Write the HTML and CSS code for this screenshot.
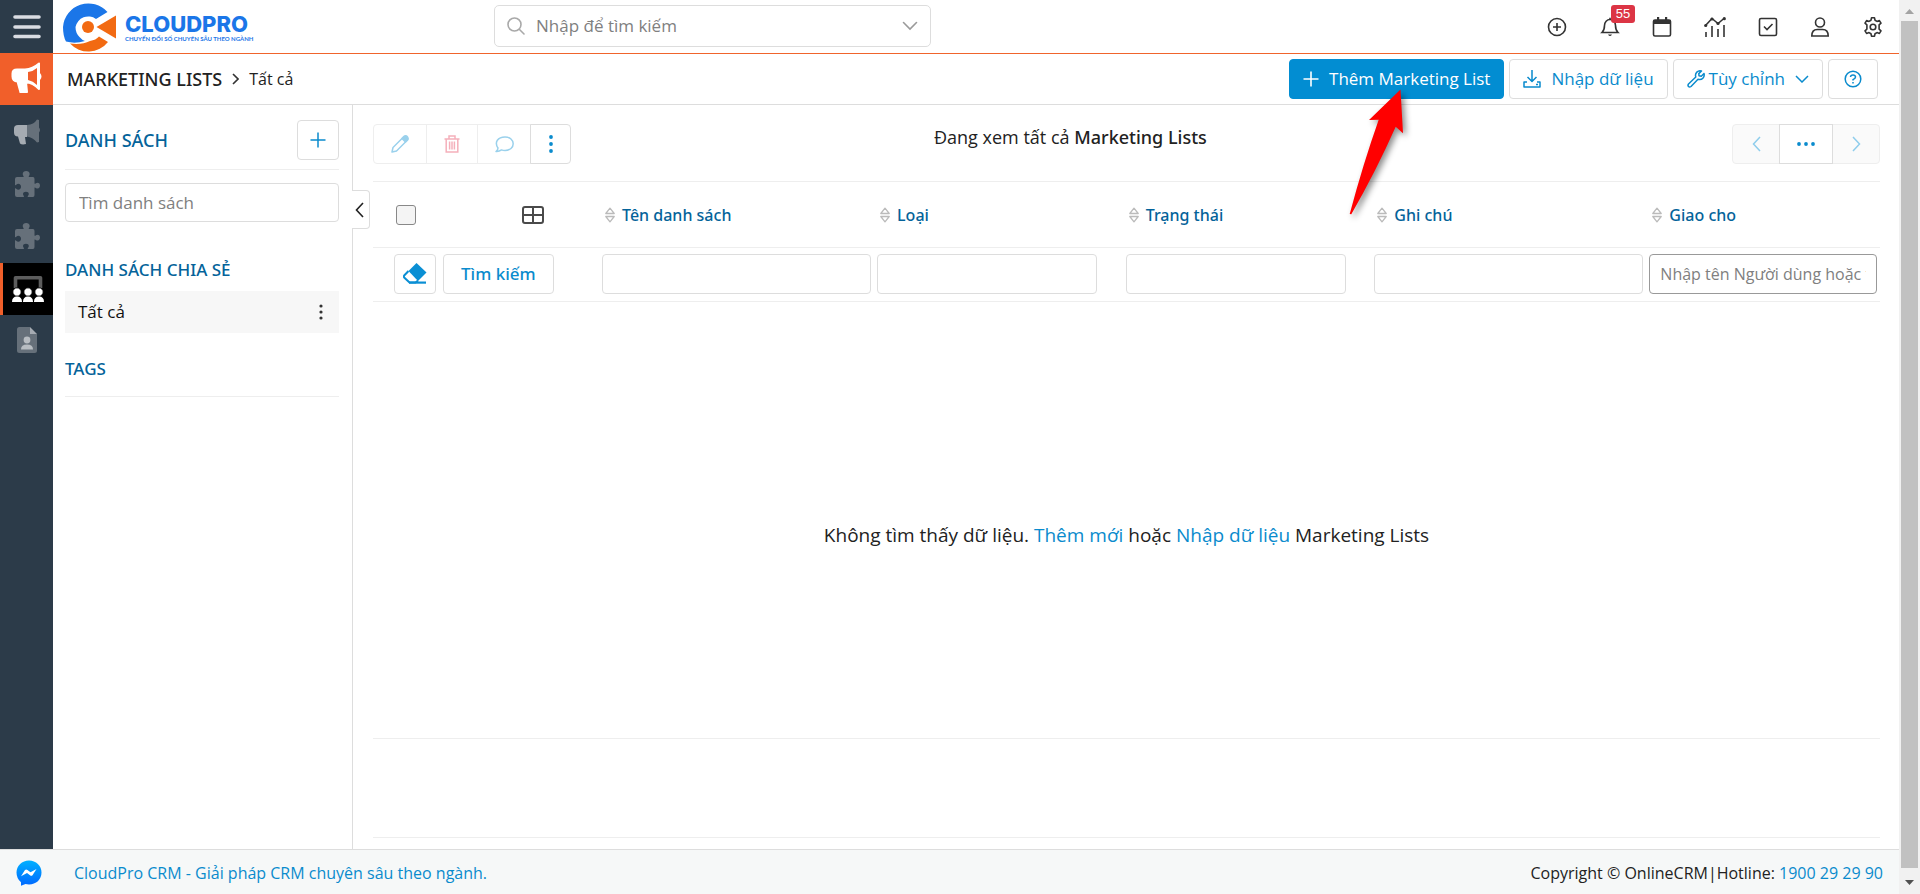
FILE: index.html
```html
<!DOCTYPE html>
<html lang="vi">
<head>
<meta charset="utf-8">
<title>Marketing Lists - CloudPro CRM</title>
<link rel="stylesheet" href="styles.css">
</head>
<body>
<svg class="sprite" aria-hidden="true">
  <symbol id="puzzle" viewBox="0 0 26 26"><path d="M1 8q0-2 2-2h6.500c.8-.5-.8-1.500-.8-3 0-2 1.600-3 3.500-3s3.500 1 3.500 3c0 1.500-1.600 2.500-.8 3H19q1.500 0 1.500 2v4.500c.6 1 1.500-.8 3-.8 1.700 0 2.500 1.300 2.500 2.800s-.8 3-2.500 3c-1.500 0-2.400-1.700-3-.8V24q0 2-1.500 2h-5c-1-.8.800-1.200.8-3 0-1.500-1.200-2.200-2.800-2.200S9 21.500 9 23c0 1.800 1.600 2.200.8 3H3q-2 0-2-2v-6.500c.8-1 1.500 1.300 3.300 1.300 1.700 0 2.700-1.400 2.700-3s-1-3-2.700-3C2.500 12.800 1.800 15 1 14z"/></symbol>
  <symbol id="sort" viewBox="0 0 10 16"><path d="M.8 6.500 5 1.200l4.200 5.300zM.8 9.500 5 14.800l4.200-5.300z" fill="none" stroke="currentColor" stroke-width="1.300" stroke-linejoin="round"/></symbol>
</svg>
<div class="viewport">
<div class="app">
  <div class="body">
    <nav class="rail" aria-label="Menu">
      <button class="rail-menu" aria-label="Mở menu"><svg width="28" height="24" viewBox="0 0 28 24"><path d="M2 2h24M2 12h24M2 21.500h24" stroke="#d9dce2" stroke-width="3.600" stroke-linecap="round"/></svg></button>
      <a class="rail-brand" href="#" aria-label="Marketing"><svg width="32" height="32" viewBox="0 0 32 32"><path d="M28 2.500v25.500c-4-4-8-6.500-13-7l1 10q-3 1.500-6.500.500L6.500 20.500Q1.500 20 1.500 15.500v-3Q1.500 8.500 6 8.500h8C20 8 24 6 28 2.500z" fill="#fff" stroke="#fff" stroke-width="2" stroke-linejoin="round"/><path d="M26 7v17q-4-4-9-5v-8q5-.5 9-4z" fill="#f15f2a"/><path d="M29 12q3 3.500 0 7z" fill="#fff"/></svg></a>
      <div class="rail-list">
        <a href="#" aria-label="Chiến dịch"><svg width="26" height="26" viewBox="0 0 26 26"><path d="M13 6H4Q0 6 0 9.500v4q0 4 4 4l2 7q2 1.500 6 .5l-1-7h2z" fill="#a5abb2"/><path d="M13 6q7-.5 10-5.500l2 .5v7.500q2 2.500 0 5v9.500l-2 .5q-4-5-10-6z" fill="#66707a"/></svg></a>
        <a href="#" aria-label="Tiện ích"><svg width="26" height="26" fill="#66707a"><use href="#puzzle"/></svg></a>
        <a href="#" aria-label="Mở rộng"><svg width="26" height="26" fill="#66707a"><use href="#puzzle"/></svg></a>
        <a class="current" href="#" aria-label="Marketing Lists"><svg width="32" height="26" viewBox="0 0 32 26"><path d="M3.500 12V1.800h25V12" fill="none" stroke="#5d5d5d" stroke-width="3.600" stroke-linejoin="round"/><g fill="#fff" stroke="#000"><circle cx="5" cy="16" r="4.200"/><circle cx="16" cy="16" r="4.200"/><circle cx="27" cy="16" r="4.200"/></g><path d="M0 26q0-5.500 5-5.500t5 5.500zM11 26q0-5.500 5-5.500t5 5.500zM22 26q0-5.500 5-5.500t5 5.500z" fill="#fff"/></svg></a>
        <a href="#" aria-label="Hồ sơ"><svg width="20" height="26" viewBox="0 0 20 26"><path d="M2.500 0H13v7h7v16.500q0 2.500-2.500 2.500h-15Q0 26 0 23.500v-21Q0 0 2.500 0z" fill="#66707a"/><path d="M13 0l7 7h-7z" fill="#a5abb2"/><circle cx="10" cy="13" r="3.400" fill="#b8bdc2"/><path d="M4 22.500q0-5 6-5t6 5z" fill="#b8bdc2"/></svg></a>
      </div>
    </nav>
    <div class="main">
      <header class="topbar">
        <a class="logo" href="#">
          <svg width="54" height="52" viewBox="0 0 54 52"><path d="M3 40.500Q0 35 0 26A25.500 25.500 0 0 1 44.500 11L33 18A13 13 0 0 0 12.500 26q0 6 4 10 3 3.500 5.500 4-10 3-19 .5z" fill="#1b76e8"/><path d="M7 42.500q12 1.500 20-2.500 6-1 9-4.500l9 5.500A25 25 0 0 1 7 42.500z" fill="#f26a12"/><circle cx="25" cy="26" r="6" fill="#f26a12"/><path d="M33.500 26 53 14.500v23z" fill="#f26a12"/></svg>
          <span class="logo-text"><strong>CLOUDPRO</strong><small>CHUYỂN ĐỔI SỐ CHUYÊN SÂU THEO NGÀNH</small></span>
        </a>
        <div class="search">
          <svg width="18" height="18" viewBox="0 0 18 18" fill="none" stroke="#a9a9a9" stroke-width="1.600" stroke-linecap="round"><circle cx="7.500" cy="7.500" r="6.500"/><path d="M12.500 12.500l4.500 4.500"/></svg>
          <input type="text" aria-label="Tìm kiếm" placeholder="Nhập để tìm kiếm">
          <svg width="16" height="10" viewBox="0 0 16 10" fill="none" stroke="#9a9a9a" stroke-width="1.600" stroke-linecap="round"><path d="M1.500 1.500 8 8l6.500-6.500"/></svg>
        </div>
        <div class="tools">
          <button aria-label="Thêm nhanh"><svg width="20" height="20" viewBox="0 0 20 20"><circle cx="10" cy="10" r="8.500"/><path d="M10 6v8M6 10h8"/></svg></button>
          <button aria-label="Thông báo"><svg width="20" height="20" viewBox="0 0 20 20"><path d="M2 15.500c2-2 2.500-4 2.500-7C4.500 5 7 2.500 10 2.500s5.500 2.500 5.500 6c0 3 .5 5 2.500 7zM10 .8v1.700"/><path d="M8 17.500h4q-2 3-4 0z" fill="#333" stroke="none"/></svg><span class="badge">55</span></button>
          <button aria-label="Lịch"><svg width="20" height="20" viewBox="0 0 20 20"><rect x="1.500" y="3" width="17" height="16" rx="1.500"/><path d="M1.500 3h17v4h-17zM5 0h2.200v4H5zM13 0h2.200v4H13z" fill="#333" stroke="none"/></svg></button>
          <button aria-label="Báo cáo"><svg width="22" height="20" viewBox="0 0 22 20"><path d="M1.500 8.500 8 1.500l6 5L20.500 1M2 15v5M8 9v11M14 12v8M20 8v12"/><g fill="#333" stroke="none"><circle cx="1.700" cy="8.500" r="1.600"/><circle cx="8" cy="2" r="1.600"/><circle cx="14" cy="6.500" r="1.600"/><circle cx="20.300" cy="1.700" r="1.600"/></g></svg></button>
          <button aria-label="Công việc"><svg width="20" height="20" viewBox="0 0 20 20"><rect x="1.500" y="1.500" width="17" height="17" rx="1.500"/><path d="M6 9.500l3 3 5.500-5.500"/></svg></button>
          <button aria-label="Tài khoản"><svg width="20" height="20" viewBox="0 0 20 20"><circle cx="10" cy="5.500" r="4.500"/><path d="M1.800 19q0-6.500 5.500-6.500h5.400q5.500 0 5.500 6.500z"/></svg></button>
          <button aria-label="Cài đặt"><svg width="20" height="20" viewBox="0 0 20 20" stroke-linejoin="round"><path d="M8 3.200 8.500.8h3l.5 2.400 2 1.200 2.400-.8 1.600 2.600-1.900 1.700v4.200l1.900 1.700-1.600 2.600-2.400-.8-2 1.200-.5 2.400h-3L8 16.800l-2-1.200-2.400.8L2 13.800l1.900-1.700V7.900L2 6.200l1.600-2.600 2.400.8z"/><circle cx="10" cy="10" r="2.800"/></svg></button>
        </div>
      </header>
      <div class="crumbs">
        <h1>MARKETING LISTS</h1>
        <svg width="7" height="12" viewBox="0 0 7 12" fill="none" stroke="#333" stroke-width="1.600"><path d="M1 1l5 5-5 5"/></svg>
        <span>Tất cả</span>
        <div class="actions">
          <div class="pointed">
            <button class="btn primary"><svg width="16" height="16" viewBox="0 0 16 16" stroke="#fff" stroke-width="1.600"><path d="M8 .5v15M.5 8h15"/></svg>Thêm Marketing List</button>
            <svg class="arrow" width="60" height="132" viewBox="0 0 60 132"><path d="M51.500 1.500 54 45.300 46.700 38.700Q27 83 2.300 126.300L.7 126Q14 76 29.700 31.700L20 32z" fill="#f00"/></svg>
          </div>
          <button class="btn"><svg width="18" height="18" viewBox="0 0 18 18" fill="none" stroke="#0a8bcd" stroke-width="1.500" stroke-linejoin="round"><path d="M9 0v11M4.500 7 9 11.500 13.500 7M4 12H1v5h16v-5h-3M13 14.500h2"/></svg>Nhập dữ liệu</button>
          <button class="btn tight"><svg width="18" height="18" viewBox="0 0 18 18" fill="none" stroke="#0a8bcd" stroke-width="1.500" stroke-linejoin="round"><path d="M14.500 1C11 0 7.500 3 8.800 7L1.500 14Q.5 15.500 1.500 16.500t2.500 0l7-7.300c4 1.300 7-2.200 6-5.700L14.300 6.200 12 5.700 11.800 3.600z"/></svg>Tùy chỉnh<svg class="caret" width="14" height="8" viewBox="0 0 14 8" fill="none" stroke="#0a8bcd" stroke-width="1.500"><path d="M1 1l6 6 6-6"/></svg></button>
          <button class="btn help" aria-label="Trợ giúp"><svg width="18" height="18" viewBox="0 0 18 18" fill="none" stroke="#0a8bcd" stroke-width="1.500"><circle cx="9" cy="9" r="7.800"/><path d="M6.500 7q.2-2 2.500-2t2.500 1.900Q11.500 8.300 9 9.700v.8M9 12v1.600"/></svg></button>
        </div>
      </div>
      <div class="columns">
        <aside class="panel">
          <div class="panel-head"><h2>DANH SÁCH</h2><button class="add" aria-label="Thêm danh sách"><svg width="16" height="16" viewBox="0 0 16 16" stroke="#0a8bcd" stroke-width="1.500"><path d="M8 .5v15M.5 8h15"/></svg></button></div>
          <input class="panel-search" type="text" aria-label="Tìm danh sách" placeholder="Tìm danh sách">
          <h2 class="shared">DANH SÁCH CHIA SẺ</h2>
          <div class="entry"><a href="#">Tất cả</a><button aria-label="Tùy chọn"><svg width="4" height="16" viewBox="0 0 4 16" fill="#333"><circle cx="2" cy="2" r="1.600"/><circle cx="2" cy="8" r="1.600"/><circle cx="2" cy="14" r="1.600"/></svg></button></div>
          <h2 class="tags">TAGS</h2>
        </aside>
        <main class="content">
          <button class="collapse" aria-label="Thu gọn"><svg width="9" height="16" viewBox="0 0 9 16" fill="none" stroke="#222" stroke-width="1.600"><path d="M8 1 1.500 8 8 15"/></svg></button>
          <div class="toolbar">
            <div class="group">
              <button class="off wide" disabled aria-label="Sửa"><svg width="18" height="18" viewBox="0 0 18 18" fill="none" stroke="#9ad1ec" stroke-width="1.500" stroke-linejoin="round"><path d="M1 17l1-4.500L13 1.500l3.500 3.500-11 11z"/><path d="M11 3.500l2.500-2.500q2-.5 3 1t.5 2.500L14.500 7z" fill="#9ad1ec"/></svg></button>
              <button class="off" disabled aria-label="Xóa"><svg width="16" height="18" viewBox="0 0 16 18" fill="none" stroke="#f5b0bb" stroke-width="1.500"><path d="M.5 4h15M5 4V1h6v3M2.200 4v13h11.600V4M5.600 6.500v8M8 6.500v8M10.400 6.500v8"/></svg></button>
              <button class="off wide" disabled aria-label="Bình luận"><svg width="19" height="17" viewBox="0 0 19 17" fill="none" stroke="#9ad1ec" stroke-width="1.500" stroke-linejoin="round"><path d="M1 15.500q2-1.500 2-3.500C-1 6 3 1 10 1c5 0 8.200 3 8.200 6.700S15 14.500 10 14.500q-2 0-3.500-.6Q4 15.800 1 15.500z"/></svg></button>
              <button class="more" aria-label="Thêm"><svg width="4" height="18" viewBox="0 0 4 18" fill="#0a8bcd"><circle cx="2" cy="2" r="1.900"/><circle cx="2" cy="9" r="1.900"/><circle cx="2" cy="16" r="1.900"/></svg></button>
            </div>
            <p class="viewing">Đang xem tất cả <b>Marketing Lists</b></p>
            <div class="group pager">
              <button class="off" disabled aria-label="Trang trước"><svg width="9" height="16" viewBox="0 0 9 16" fill="none" stroke="#8fcdec" stroke-width="1.500"><path d="M8 1 1.500 8 8 15"/></svg></button>
              <button class="dots" aria-label="Chọn trang"><svg width="18" height="4" viewBox="0 0 18 4" fill="#0a8bcd"><circle cx="2" cy="2" r="1.900"/><circle cx="9" cy="2" r="1.900"/><circle cx="16" cy="2" r="1.900"/></svg></button>
              <button class="off" disabled aria-label="Trang sau"><svg width="9" height="16" viewBox="0 0 9 16" fill="none" stroke="#8fcdec" stroke-width="1.500"><path d="M1 1l6.500 7L1 15"/></svg></button>
            </div>
          </div>
          <table>
            <colgroup><col class="c-tools"><col class="c-wide"><col class="c-mid"><col class="c-mid"><col class="c-wide"><col></colgroup>
            <thead>
              <tr>
                <th class="pick"><div><input type="checkbox" aria-label="Chọn tất cả"><button aria-label="Chọn cột"><svg width="22" height="18" viewBox="0 0 22 18" fill="none" stroke="#4a4a4a" stroke-width="2"><rect x="1" y="1" width="20" height="16" rx="2"/><path d="M11 1v16M1 9h20"/></svg></button></div></th>
                <th><svg class="sort"><use href="#sort"/></svg>Tên danh sách</th>
                <th><svg class="sort"><use href="#sort"/></svg>Loại</th>
                <th><svg class="sort"><use href="#sort"/></svg>Trạng thái</th>
                <th><svg class="sort"><use href="#sort"/></svg>Ghi chú</th>
                <th><svg class="sort"><use href="#sort"/></svg>Giao cho</th>
              </tr>
            </thead>
            <tbody>
              <tr>
                <td class="finder"><div><button class="btn erase" aria-label="Xóa lọc"><svg width="24" height="21" viewBox="0 0 24 21"><path d="M13.500 0 23.500 9.500 15 18 5.500 8z" fill="#0a8fd4"/><path d="M5.500 8 1.200 12.500q-.8 1 0 2L6.500 19.500h6L15 17.500" fill="none" stroke="#0a8fd4" stroke-width="2"/><path d="M6 19.600h17" stroke="#0a8fd4" stroke-width="2.200"/></svg></button><button class="btn find">Tìm kiếm</button></div></td>
                <td><input type="text" aria-label="Tên danh sách"></td>
                <td><input class="short" type="text" aria-label="Loại"></td>
                <td><input class="short" type="text" aria-label="Trạng thái"></td>
                <td><input type="text" aria-label="Ghi chú"></td>
                <td><input class="owner" type="text" aria-label="Giao cho" placeholder="Nhập tên Người dùng hoặc tên Nhóm"></td>
              </tr>
            </tbody>
          </table>
          <p class="empty"><span>Không tìm thấy dữ liệu. <a href="#">Thêm mới</a> hoặc <a href="#">Nhập dữ liệu</a> Marketing Lists</span></p>
          <div class="strip"></div>
        </main>
      </div>
    </div>
  </div>
  <footer class="footer">
    <a class="chat" href="#" aria-label="Messenger"><svg width="26" height="26" viewBox="0 0 26 26"><defs><linearGradient id="msg" x1="0" y1="0" x2="0" y2="1"><stop offset="0" stop-color="#00b0ff"/><stop offset="1" stop-color="#0068ff"/></linearGradient></defs><path d="M13 .5c7 0 12.500 5 12.500 12S20 24.500 13 24.500q-2 0-3.500-.4L5 25.800v-3.500Q.5 18.500.5 12.500C.5 5.500 6 .5 13 .5z" fill="url(#msg)"/><path d="M5 16.200l4-6.200q1.200-1 2.500 0l3 2.300L20.500 9l-4 6.300q-1.200 1-2.500 0L11 13z" fill="#fff"/></svg></a>
    <a href="#">CloudPro CRM - Giải pháp CRM chuyên sâu theo ngành.</a>
    <span class="legal">Copyright © OnlineCRM|Hotline: <a href="#">1900 29 29 90</a></span>
  </footer>
</div>
<div class="scroll" aria-hidden="true">
  <svg width="9" height="5" viewBox="0 0 9 5"><path d="M0 5 4.500 0 9 5z" fill="#a3a3a3"/></svg>
  <div class="thumb"></div>
  <svg width="9" height="5" viewBox="0 0 9 5"><path d="M0 0 4.500 5 9 0z" fill="#505050"/></svg>
</div>
</div>
</body>
</html>
```
FILE: styles.css
```css
* { box-sizing: border-box; }
body { margin: 0; background: #fff; color: #222; font: 17px/24px "Open Sans", "Noto Sans", sans-serif; }
svg { display: block; flex: none; }
a { color: #0a8bcd; text-decoration: none; }
h1, h2, p { margin: 0; }
h1, h2, th, .viewing b, .btn.find { font-family: "Noto Sans", sans-serif; font-weight: 500; }
button, input { font: inherit; color: inherit; }
button { margin: 0; padding: 0; border: 0; background: none; cursor: pointer; }
.sprite { display: none; }

.viewport { display: flex; min-height: 100vh; }
.app { flex: 1; min-width: 0; display: flex; flex-direction: column; }
.body { flex: 1; display: flex; }

.rail { width: 53px; background: #2c3b49; display: flex; flex-direction: column; }
.rail a, .rail-menu { display: flex; align-items: center; justify-content: center; }
.rail-menu { height: 53px; }
.rail-brand { height: 52px; background: #f15f2a; padding-bottom: 4px; }
.rail-list { padding-top: 2px; }
.rail-list a { height: 52px; padding-bottom: 2px; }
.rail-list .current { background: #000; border-left: 3px solid #f15f2a; padding-bottom: 0; }

.main { flex: 1; min-width: 0; display: flex; flex-direction: column; }
.topbar { height: 54px; border-bottom: 1px solid #f0642c; display: flex; align-items: center; padding: 0 15px 0 10px; }
.logo { flex: 0 0 431px; display: flex; align-items: center; gap: 8px; }
.logo-text { display: flex; flex-direction: column; font-family: Inter, sans-serif; color: #1b76e8; padding-top: 2px; }
.logo-text strong { font-size: 22px; line-height: 22px; font-weight: 800; }
.logo-text small { font-family: Lato, sans-serif; font-size: 6px; line-height: 8px; font-weight: 700; white-space: nowrap; }
.search { flex: 0 1 437px; height: 42px; margin-bottom: 1px; padding: 0 12px; display: flex; align-items: center; gap: 11px; border: 1px solid #ddd; border-radius: 5px; }
.search input { flex: 1; min-width: 0; border: 0; padding: 0; outline: 0; background: none; }
::placeholder { color: #808080; opacity: 1; }
.tools { margin-left: auto; width: 338px; display: flex; justify-content: space-between; }
.tools button { position: relative; width: 22px; display: flex; justify-content: center; }
.tools svg { fill: none; stroke: #333; stroke-width: 1.6; }
.badge { position: absolute; left: 12px; top: -12px; padding: 0 5px; border-radius: 3px; background: #dc3545; color: #fff; font: 13px/18px "Liberation Sans", sans-serif; }

.crumbs { height: 51px; border-bottom: 1px solid #ddd; padding: 0 21px 0 14px; display: flex; align-items: center; gap: 10px; }
.crumbs h1 { font-size: 18px; }
.crumbs > span { font-size: 16px; }
.actions { margin-left: auto; display: flex; gap: 5px; }
.pointed { position: relative; z-index: 1; }
.arrow { position: absolute; left: 60px; top: 29px; filter: drop-shadow(3px 3px 3px rgba(0, 0, 0, .45)); pointer-events: none; overflow: visible; }
.btn { height: 40px; display: flex; align-items: center; gap: 10px; padding: 0 13px; border: 1px solid #ddd; border-radius: 4px; background: #fff; color: #0a8bcd; white-space: nowrap; }
.btn.primary { background: #028dd2; border-color: #028dd2; color: #fff; }
.btn.tight { gap: 4px; }
.btn.help { padding: 0 15px; }
.caret { margin-left: 6px; }

.columns { flex: 1; display: flex; }
.panel { width: 300px; border-right: 1px solid #ddd; padding: 15px 13px 0 12px; }
.panel h2 { color: #04639a; font-size: 17px; }
.panel .panel-head h2 { font-size: 18px; }
.panel-head { height: 50px; padding-bottom: 9px; border-bottom: 1px solid #eee; display: flex; align-items: center; justify-content: space-between; }
.add { width: 42px; height: 40px; border: 1px solid #ddd; border-radius: 4px; display: flex; align-items: center; justify-content: center; }
.panel-search { width: 100%; height: 39px; margin-top: 13px; padding: 0 13px; border: 1px solid #ddd; border-radius: 4px; }
.panel .shared { margin-top: 36px; }
.entry { height: 42px; margin-top: 9px; padding: 0 16px 0 13px; background: #f7f7f7; display: flex; align-items: center; justify-content: space-between; }
.entry a { color: #111; }
.panel .tags { margin-top: 24px; padding-bottom: 15px; border-bottom: 1px solid #eee; }

.content { flex: 1; min-width: 0; position: relative; display: flex; flex-direction: column; padding: 0 19px 11px 20px; }
.collapse { position: absolute; left: -1px; top: 85px; width: 18px; height: 39px; border: 1px solid #ddd; border-left: 0; border-radius: 0 4px 4px 0; background: #fff; display: flex; align-items: center; padding-left: 3px; }
.toolbar { height: 76px; display: grid; grid-template-columns: 5fr auto 6fr; padding-top: 19px; align-items: start; }
.group { display: flex; }
.group button { width: 52px; height: 40px; display: flex; align-items: center; justify-content: center; border: 1px solid #ddd; margin-left: -1px; }
.group .off { border-color: #eee; }
.group button:first-child { border-radius: 4px 0 0 4px; margin-left: 0; }
.group button:last-child { border-radius: 0 4px 4px 0; }
.group .wide { width: 54px; }
.group .more { width: 41px; }
.pager { justify-self: end; }
.group.pager .off { width: 48px; background: #fafafa; }
.group.pager .dots { width: 54px; position: relative; }
.viewing { font-size: 18px; padding-top: 1px; }

table { width: 100%; table-layout: fixed; border-collapse: separate; border-spacing: 0; }
th, td { padding: 0 3px; border-top: 1px solid #eee; text-align: left; }
td { border-bottom: 1px solid #eee; height: 55px; padding-bottom: 2px; }
th { height: 66px; color: #04639a; font-size: 16px; padding-top: 1px; padding-left: 6px; }
.c-tools { width: 15%; }
.c-wide { width: 18.25%; }
.c-mid { width: 16.5%; }
.sort { display: inline-block; width: 10px; height: 16px; margin-right: 7px; color: #bbb; vertical-align: -2px; }
.pick div { display: flex; align-items: center; justify-content: space-between; padding: 0 52px 0 17px; }
.pick input { appearance: none; width: 20px; height: 20px; margin: 0; border: 1px solid #888; border-radius: 3px; background: #f4f4f4; }
.finder div { display: flex; gap: 7px; padding-left: 18px; }
.erase { width: 42px; padding: 0; justify-content: center; }
.find { padding: 0 17px; font-size: 17px; }
td input { display: block; width: 100%; height: 40px; padding: 0 10px; border: 1px solid #ddd; border-radius: 4px; font-size: 16px; }
.short { max-width: 220px; }
.owner { border-color: #999; }
.empty { flex: 1; display: flex; align-items: center; justify-content: center; padding-top: 30px; font-size: 19px; border-bottom: 1px solid #eee; }
.strip { height: 99px; border-bottom: 1px solid #eee; }

.footer { height: 45px; background: #f6f8f8; border-top: 1px solid #ddd; display: flex; align-items: center; padding: 1px 16px 0 16px; font-size: 16px; }
.chat { width: 58px; }
.legal { margin-left: auto; }

.scroll { width: 21px; background: #f1f1f1; padding: 9px 3px; display: flex; flex-direction: column; align-items: center; gap: 7px; }
.thumb { flex: 1; width: 17px; margin-bottom: 5px; background: #c1c1c1; }
```
